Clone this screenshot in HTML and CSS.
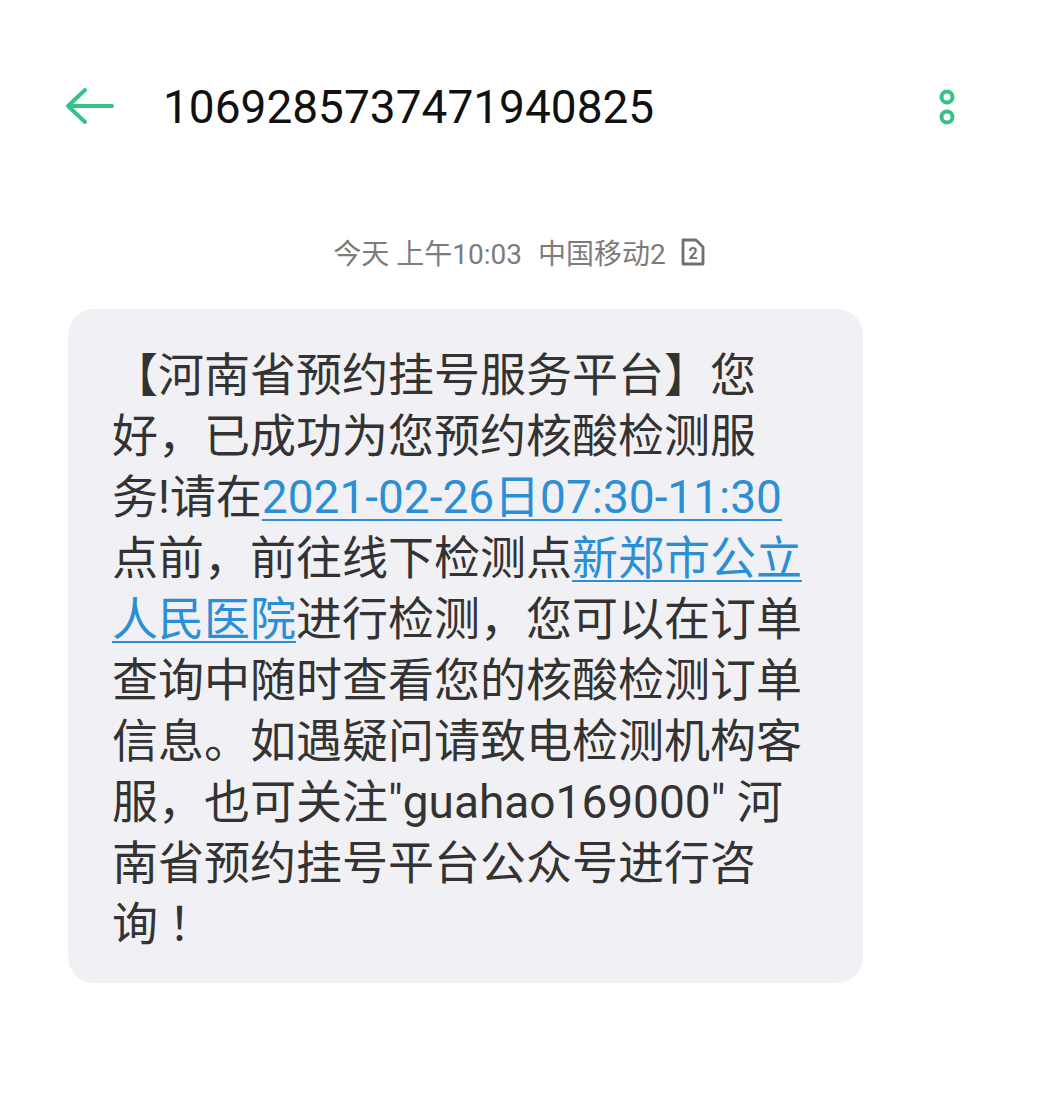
FILE: index.html
```html
<!DOCTYPE html>
<html lang="zh-CN">
<head>
<meta charset="utf-8">
<link rel="stylesheet" href="styles.css">
</head>
<body>
<header class="topbar">
  <svg class="back" width="50" height="40" viewBox="0 0 50 40">
    <path d="M3 19 H47 M20 3 L3 19 L20 35" fill="none" stroke="#36c284" stroke-width="4" stroke-linecap="round" stroke-linejoin="round"/>
  </svg>
  <div class="number">1069285737471940825</div>
  <svg class="more" width="20" height="40" viewBox="0 0 20 40">
    <circle cx="10" cy="10" r="5.5" fill="none" stroke="#36c284" stroke-width="4"/>
    <circle cx="10" cy="30" r="5.5" fill="none" stroke="#36c284" stroke-width="4"/>
  </svg>
</header>
<div class="stamp">
  <span>今天 上午10:03</span>
  <span>中国移动2</span>
  <svg class="sim" width="26" height="30" viewBox="0 0 26 30">
    <path d="M3 3 H16 L23 10 V27 H3 Z" fill="none" stroke="#707070" stroke-width="2.8" stroke-linejoin="round"/>
    <text x="13" y="22" text-anchor="middle" font-family="Roboto" font-size="16" font-weight="700" fill="#707070">2</text>
  </svg>
</div>
<main class="thread">
  <div class="bubble">【河南省预约挂号服务平台】您好，已成功为您预约核酸检测服务!请在<a class="link">2021-02-26日07:30-11:30</a>点前，前往线下检测点<a class="link">新郑市公立人民医院</a>进行检测，您可以在订单查询中随时查看您的核酸检测订单信息。如遇疑问请致电检测机构客服，也可关注"guahao169000" 河南省预约挂号平台公众号进行咨询<span class="bang">！</span></div>
</main>
</body>
</html>
```
FILE: styles.css
```css
html, body {
  margin: 0;
  padding: 0;
  background: #ffffff;
}
body {
  font-family: Roboto, "Noto Sans CJK SC", sans-serif;
  width: 1039px;
  height: 1101px;
  overflow: hidden;
}
.topbar {
  display: flex;
  align-items: center;
  height: 56px;
  padding: 79px 0 0 65px;
}
.back {
  display: block;
  flex: none;
}
.number {
  margin-left: 48px;
  font-size: 46px;
  color: #111111;
  line-height: 56px;
  flex: 1;
}
.more {
  display: block;
  flex: none;
  margin-right: 82px;
}
.stamp {
  display: flex;
  justify-content: center;
  align-items: center;
  gap: 16px;
  margin-top: 97px;
  height: 40px;
  font-size: 28px;
  color: #7c7c7c;
}
.sim {
  display: block;
  margin-left: -2px;
}
.thread {
  padding: 37px 0 0 68px;
}
.bubble {
  width: 696px;
  padding: 36px 55px 28px 44px;
  background: #f1f1f5;
  border-radius: 26px;
  font-size: 46px;
  line-height: 61px;
  color: #333333;
}
.bang {
  padding-left: 10px;
}
.link {
  color: #2a8fd4;
  text-decoration: underline;
  text-decoration-thickness: 2px;
  text-underline-offset: 6px;
}
```
